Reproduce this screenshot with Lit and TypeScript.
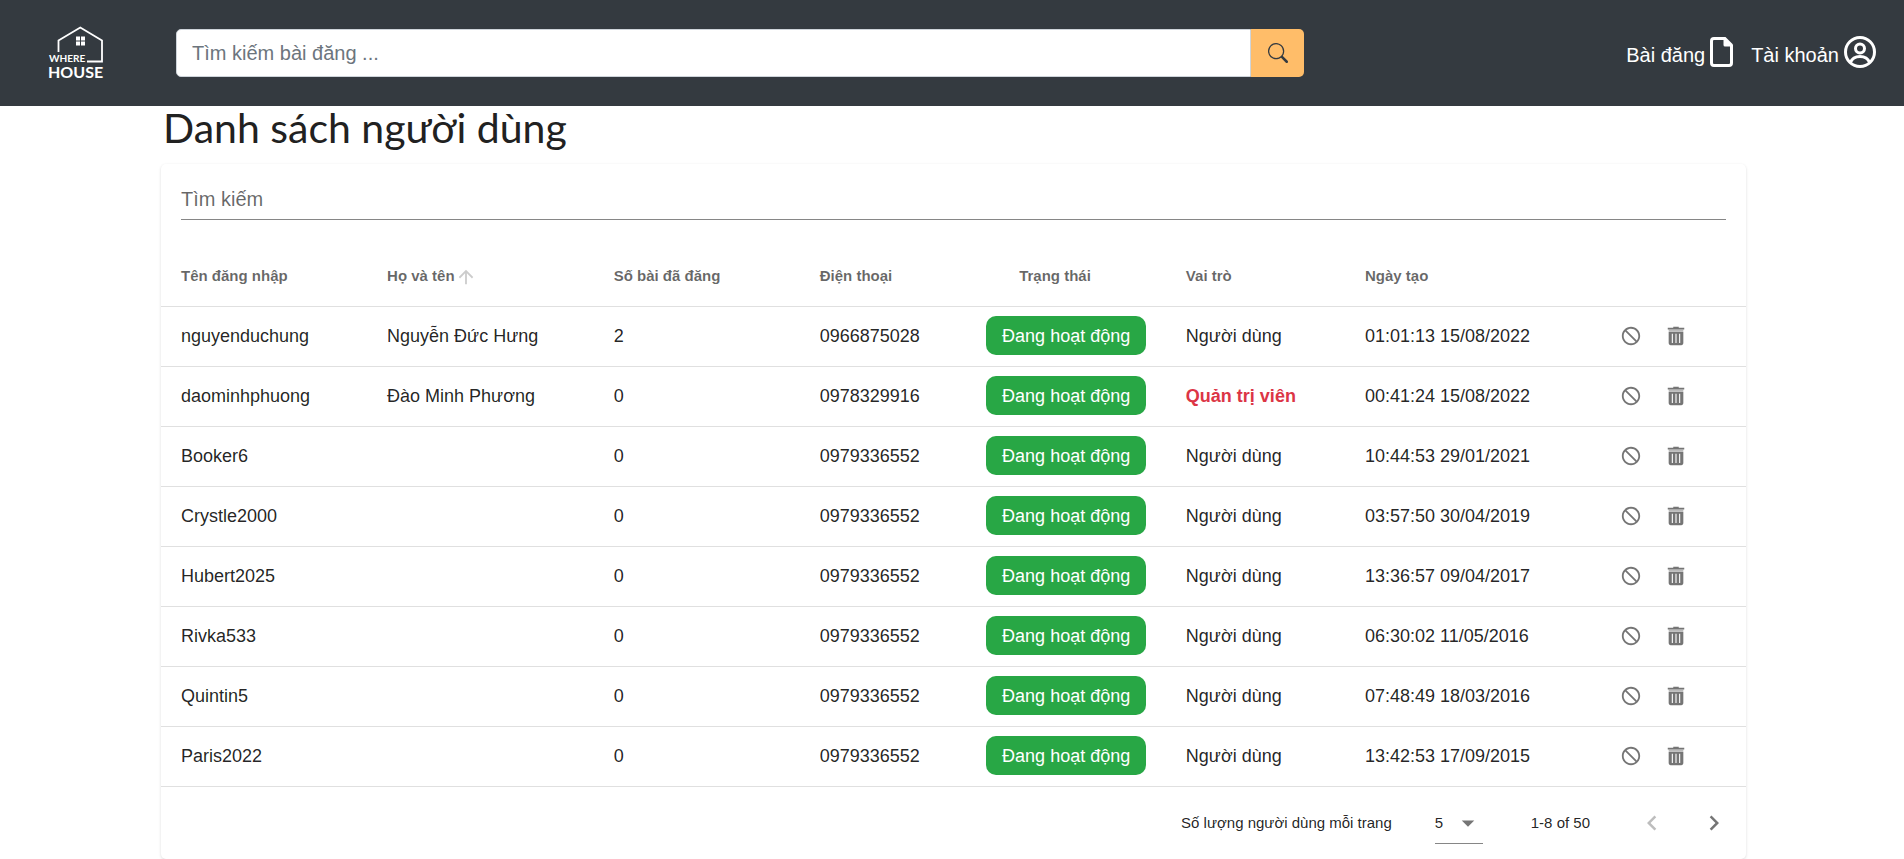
import { LitElement, html, css, svg } from "lit";
import { customElement, state } from "lit/decorators.js";
import { classMap } from "lit/directives/class-map.js";

interface User {
  username: string;
  fullName: string;
  posts: number;
  phone: string;
  admin: boolean;
  created: string;
}

const USERS: User[] = [
  { username: "nguyenduchung", fullName: "Nguyễn Đức Hưng", posts: 2, phone: "0966875028", admin: false, created: "01:01:13 15/08/2022" },
  { username: "daominhphuong", fullName: "Đào Minh Phương", posts: 0, phone: "0978329916", admin: true, created: "00:41:24 15/08/2022" },
  { username: "Booker6", fullName: "", posts: 0, phone: "0979336552", admin: false, created: "10:44:53 29/01/2021" },
  { username: "Crystle2000", fullName: "", posts: 0, phone: "0979336552", admin: false, created: "03:57:50 30/04/2019" },
  { username: "Hubert2025", fullName: "", posts: 0, phone: "0979336552", admin: false, created: "13:36:57 09/04/2017" },
  { username: "Rivka533", fullName: "", posts: 0, phone: "0979336552", admin: false, created: "06:30:02 11/05/2016" },
  { username: "Quintin5", fullName: "", posts: 0, phone: "0979336552", admin: false, created: "07:48:49 18/03/2016" },
  { username: "Paris2022", fullName: "", posts: 0, phone: "0979336552", admin: false, created: "13:42:53 17/09/2015" },
];

const icon = (path: unknown, size: number, box = 24) =>
  html`<svg width=${size} height=${size} viewBox="0 0 ${box} ${box}" fill="currentColor" aria-hidden="true">${path}</svg>`;

const arrowUp = svg`<path d="M13 20H11V8L5.5 13.5L4.08 12.08L12 4.16L19.92 12.08L18.5 13.5L13 8V20Z"/>`;
const cancel = svg`<path d="M12 2C17.5 2 22 6.5 22 12S17.5 22 12 22 2 17.5 2 12 6.5 2 12 2M12 4C10.1 4 8.4 4.6 7.1 5.7L18.3 16.9C19.3 15.5 20 13.8 20 12C20 7.6 16.4 4 12 4M16.9 18.3L5.7 7.1C4.6 8.4 4 10.1 4 12C4 16.4 7.6 20 12 20C13.9 20 15.6 19.4 16.9 18.3Z"/>`;
const trash = svg`<path d="M9 2H15V3H21V5H3V3H9Z"/><path opacity=".5" d="M4 5H20V7.5H4Z"/><path fill-rule="evenodd" d="M4 7.5H20V20Q20 22 18 22H6Q4 22 4 20ZM7.4 9.5V19.5H8.6V9.5ZM11.4 9.5V19.5H12.6V9.5ZM15.4 9.5V19.5H16.6V9.5Z"/>`;
const chevronLeft = svg`<path d="M15.41 16.58L10.83 12L15.41 7.41L14 6L8 12L14 18L15.41 16.58Z"/>`;
const chevronRight = svg`<path d="M8.59 16.58L13.17 12L8.59 7.41L10 6L16 12L10 18L8.59 16.58Z"/>`;
const menuDown = svg`<path d="M7 10L12 15L17 10H7Z"/>`;
const search = svg`<path d="M11.742 10.344a6.5 6.5 0 1 0-1.397 1.398h-.001c.03.04.062.078.098.115l3.85 3.85a1 1 0 0 0 1.415-1.414l-3.85-3.85a1.007 1.007 0 0 0-.115-.1zM12 6.5a5.5 5.5 0 1 1-11 0 5.5 5.5 0 0 1 11 0z"/>`;
const account = svg`<g fill="none" stroke="currentColor" stroke-width="3"><circle cx="16" cy="16" r="14.5"/><circle cx="16" cy="12.5" r="4.5"/><path d="M6.5 26.5C8 22.5 12 20.5 16 20.5S24 22.5 25.5 26.5"/></g>`;

@customElement("site-header")
class SiteHeader extends LitElement {
  static styles = css`
    :host {
      display: block;
      background: #343a40;
      color: #fff;
      font: 20px/30px "Liberation Sans", Arial, sans-serif;
    }
    .bar {
      display: flex;
      align-items: center;
      height: 106px;
      padding: 0 28px 0 48px;
    }
    .logo {
      display: flex;
      margin-right: 72px;
    }
    .logo text {
      font-family: Lato, sans-serif;
      font-weight: 700;
    }
    .search {
      display: flex;
      flex: 0 1 1128px;
      height: 48px;
    }
    .search input {
      flex: 1;
      min-width: 0;
      box-sizing: border-box;
      padding: 0 15px;
      border: 1px solid #ced4da;
      border-radius: 5px 0 0 5px;
      font: inherit;
      color: #495057;
      outline: none;
    }
    .search input::placeholder {
      color: #6c757d;
      opacity: 1;
    }
    .search button {
      display: flex;
      align-items: center;
      justify-content: center;
      width: 53px;
      padding: 0;
      border: 0;
      border-radius: 0 5px 5px 0;
      background: #ffbd69;
      color: #343a40;
      cursor: pointer;
    }
    .links {
      display: flex;
      gap: 18px;
      margin-left: auto;
    }
    .links a {
      display: flex;
      align-items: center;
      gap: 5px;
      color: inherit;
      text-decoration: none;
    }
    .links span {
      padding-top: 4px;
    }
    .links svg {
      margin-bottom: 2px;
    }
  `;

  render() {
    return html`
      <header class="bar">
        <a class="logo" href="#" aria-label="Where House">
          <svg width="56" height="56" viewBox="0 0 56 56" fill="#fff">
            <path d="M10.5 27V15.500L32.300 2.500L54 15.500V36.500H39" fill="none" stroke="#fff" stroke-width="1.800" />
            <path d="M28 11.500h4v4h-4zM33 11.500h4v4h-4zM28 16.500h4v4h-4zM33 16.500h4v4h-4z" />
            <text x="1" y="37" font-size="10">WHERE</text>
            <text x="0" y="53" font-size="16">HOUSE</text>
          </svg>
        </a>
        <form class="search" role="search" @submit=${(e: Event) => e.preventDefault()}>
          <input type="text" placeholder="Tìm kiếm bài đăng ..." aria-label="Tìm kiếm bài đăng" />
          <button type="submit" aria-label="Tìm kiếm">${icon(search, 20, 16)}</button>
        </form>
        <nav class="links">
          <a href="#">
            <span>Bài đăng</span>
            <svg width="23" height="34" viewBox="0 0 23 34" aria-hidden="true">
              <path d="M14.500 3.500H4Q1.500 3.500 1.500 6V28Q1.500 30.500 4 30.500H19Q21.500 30.500 21.500 28V10" fill="none" stroke="#fff" stroke-width="3" />
              <path d="M13.500 2H15.500L23 9.500V11.500H15Q13.500 11.500 13.500 10Z" fill="#fff" />
            </svg>
          </a>
          <a href="#">
            <span>Tài khoản</span>
            ${icon(account, 32, 32)}
          </a>
        </nav>
      </header>
    `;
  }
}

@customElement("user-table")
class UserTable extends LitElement {
  @state() private perPage = "5";

  static styles = css`
    :host {
      display: block;
      border-radius: 5px;
      background: #fff;
      box-shadow: 0 1px 3px rgba(0, 0, 0, 0.14);
      color: rgba(0, 0, 0, 0.87);
      font: 18px/24px "Liberation Sans", Arial, sans-serif;
    }
    .filter {
      padding: 16px 20px 27px;
    }
    .filter input {
      display: block;
      box-sizing: border-box;
      width: 100%;
      height: 40px;
      padding: 0;
      border: 0;
      border-bottom: 1px solid #868686;
      background: none;
      font: inherit;
      font-size: 20px;
      color: inherit;
      outline: none;
    }
    .filter input::placeholder {
      color: rgba(0, 0, 0, 0.6);
      opacity: 1;
    }
    table {
      width: 100%;
      table-layout: fixed;
      border-collapse: separate;
      border-spacing: 0;
    }
    .c-user { width: 13%; }
    .c-name { width: 14.3%; }
    .c-posts { width: 13%; }
    .c-phone { width: 10.5%; }
    .c-status { width: 12.6%; }
    .c-role { width: 11.3%; }
    .c-date { width: 16%; }
    th,
    td {
      box-sizing: border-box;
      height: 60px;
      padding: 0 20px 2px;
      border-bottom: 1px solid #e0e0e0;
      text-align: left;
      white-space: nowrap;
    }
    th {
      color: rgba(0, 0, 0, 0.6);
      font-size: 15px;
    }
    th svg {
      color: rgba(0, 0, 0, 0.2);
      vertical-align: bottom;
    }
    th.status {
      padding-right: 42px;
      text-align: center;
    }
    td.status {
      text-align: center;
    }
    .badge {
      display: inline-block;
      width: 160px;
      height: 39px;
      padding: 0;
      border: 0;
      border-radius: 10px;
      background: #28a745;
      color: #fff;
      font: inherit;
      vertical-align: middle;
      cursor: pointer;
    }
    .admin {
      color: #dc3545;
      font-weight: 700;
    }
    .actions {
      display: flex;
      gap: 23px;
      padding-left: 1px;
    }
    .actions button,
    .pager button {
      display: flex;
      padding: 0;
      border: 0;
      background: none;
      color: #757575;
      cursor: pointer;
    }
    .footer {
      display: flex;
      align-items: center;
      justify-content: flex-end;
      height: 72px;
      padding: 0 17px 0 20px;
      font-size: 15px;
    }
    .per-page {
      display: flex;
      align-items: center;
      gap: 43px;
    }
    .select {
      display: grid;
      align-items: center;
      width: 48px;
      height: 41px;
      border-bottom: 1px solid #868686;
    }
    .select select,
    .select svg {
      grid-area: 1 / 1;
    }
    .select select {
      width: 100%;
      height: 41px;
      padding: 0;
      border: 0;
      appearance: none;
      background: none;
      color: inherit;
      font: inherit;
      outline: none;
    }
    .select svg {
      justify-self: end;
      color: #757575;
      pointer-events: none;
    }
    .range {
      margin: 0 47px 0 48px;
    }
    .pager {
      display: flex;
      gap: 32px;
    }
    .pager button:disabled {
      color: #bdbdbd;
      cursor: default;
    }
  `;

  private row(u: User) {
    return html`
      <tr>
        <td>${u.username}</td>
        <td>${u.fullName}</td>
        <td>${u.posts}</td>
        <td>${u.phone}</td>
        <td class="status"><button class="badge" type="button">Đang hoạt động</button></td>
        <td><span class=${classMap({ admin: u.admin })}>${u.admin ? "Quản trị viên" : "Người dùng"}</span></td>
        <td>${u.created}</td>
        <td>
          <div class="actions">
            <button type="button" aria-label="Khóa">${icon(cancel, 22)}</button>
            <button type="button" aria-label="Xóa">${icon(trash, 22)}</button>
          </div>
        </td>
      </tr>
    `;
  }

  render() {
    return html`
      <div class="filter">
        <input type="text" placeholder="Tìm kiếm" aria-label="Tìm kiếm" />
      </div>
      <table>
        <colgroup>
          <col class="c-user" />
          <col class="c-name" />
          <col class="c-posts" />
          <col class="c-phone" />
          <col class="c-status" />
          <col class="c-role" />
          <col class="c-date" />
          <col />
        </colgroup>
        <thead>
          <tr>
            <th>Tên đăng nhập</th>
            <th aria-sort="ascending">Họ và tên${icon(arrowUp, 22)}</th>
            <th>Số bài đã đăng</th>
            <th>Điện thoại</th>
            <th class="status">Trạng thái</th>
            <th>Vai trò</th>
            <th>Ngày tạo</th>
            <th></th>
          </tr>
        </thead>
        <tbody>
          ${USERS.map((u) => this.row(u))}
        </tbody>
      </table>
      <div class="footer">
        <label class="per-page">
          Số lượng người dùng mỗi trang
          <span class="select">
            <select .value=${this.perPage} @change=${(e: Event) => (this.perPage = (e.target as HTMLSelectElement).value)}>
              <option>5</option>
              <option>10</option>
              <option>15</option>
            </select>
            ${icon(menuDown, 30)}
          </span>
        </label>
        <span class="range">1-8 of 50</span>
        <div class="pager">
          <button type="button" disabled aria-label="Trang trước">${icon(chevronLeft, 30)}</button>
          <button type="button" aria-label="Trang sau">${icon(chevronRight, 30)}</button>
        </div>
      </div>
    `;
  }
}

@customElement("app-root")
class AppRoot extends LitElement {
  static styles = css`
    :host {
      display: block;
      background: #fff;
    }
    .content {
      padding: 0 158px 0 161px;
    }
    h1 {
      margin: 0;
      padding: 0 2px 15px;
      color: #212121;
      font: 400 41px/43px Lato, sans-serif;
    }
  `;

  render() {
    return html`
      <site-header></site-header>
      <main class="content">
        <h1>Danh sách người dùng</h1>
        <user-table></user-table>
      </main>
    `;
  }
}
